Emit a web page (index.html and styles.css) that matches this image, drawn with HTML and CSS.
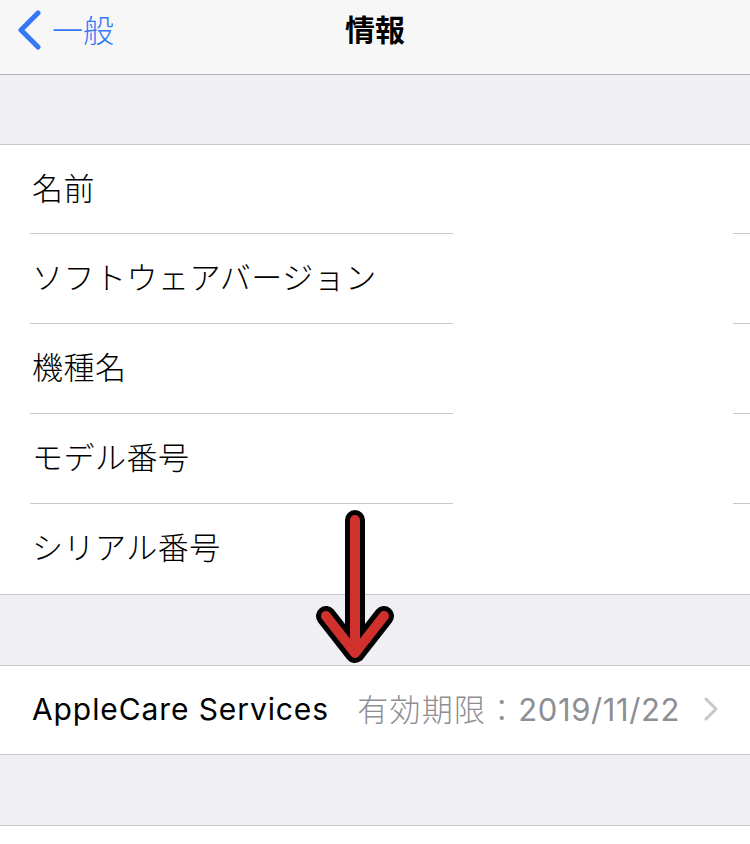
FILE: index.html
```html
<!DOCTYPE html>
<html lang="ja">
<head>
<meta charset="utf-8">
<link rel="stylesheet" href="styles.css">
</head>
<body>
<div class="screen">
  <header class="nav">
    <div class="back">
      <svg class="back-icon" width="26" height="40" viewBox="0 0 26 40"><path d="M22 3 L5 20 L22 37" fill="none" stroke="#3478f6" stroke-width="5" stroke-linecap="round" stroke-linejoin="round"/></svg>
      <span class="back-text">一般</span>
    </div>
    <div class="title">情報</div>
  </header>
  <div class="gap first"></div>
  <section class="group">
    <div class="row"><span class="label">名前</span></div>
    <div class="row"><span class="label">ソフトウェアバージョン</span></div>
    <div class="row"><span class="label">機種名</span></div>
    <div class="row"><span class="label">モデル番号</span></div>
    <div class="row last"><span class="label">シリアル番号</span></div>
  </section>
  <div class="gap"></div>
  <section class="group">
    <div class="row last single">
      <span class="label latin">AppleCare Services</span>
      <span class="value"><span class="jp">有効期限：</span>2019/11/22</span>
      <svg class="chev" width="16" height="24" viewBox="0 0 16 24"><path d="M3 2 L13 12 L3 22" fill="none" stroke="#c7c7cc" stroke-width="3" stroke-linecap="round" stroke-linejoin="round"/></svg>
    </div>
  </section>
  <div class="gap"></div>
  <div class="bottom"></div>
  <svg class="arrow" width="84" height="170" viewBox="0 0 84 170"><path d="M42 20 L42 145 M13 116 L42 153 L71 116" fill="none" stroke="#000" stroke-width="20" stroke-linecap="round" stroke-linejoin="round"/><path d="M42 20 L42 145 M13 116 L42 153 L71 116" fill="none" stroke="#d0312d" stroke-width="10" stroke-linecap="round" stroke-linejoin="round"/></svg>
</div>
</body>
</html>
```
FILE: styles.css
```css
* { box-sizing: border-box; }
html, body { margin: 0; padding: 0; }
body {
  width: 750px;
  height: 844px;
  overflow: hidden;
  background: #ffffff;
  font-family: "Inter", "Noto Sans CJK JP", sans-serif;
  color: #000;
}
.screen { position: relative; width: 750px; height: 844px; }
.nav {
  height: 75px;
  background: #f7f7f8;
  border-bottom: 1px solid #b2b2b5;
  display: flex;
  align-items: center;
  position: relative;
}
.back {
  display: flex;
  align-items: center;
  padding-left: 16px;
  gap: 10px;
  margin-top: -14px;
}
.back-text {
  color: #3478f6;
  font-family: "Noto Sans CJK JP", sans-serif;
  font-weight: 300;
  font-size: 31px;
  line-height: 40px;
  margin-top: -2px;
}
.title {
  position: absolute;
  left: 0; right: 0;
  top: 8px;
  text-align: center;
  font-family: "Noto Sans CJK JP", sans-serif;
  font-weight: 700;
  font-size: 30px;
  line-height: 40px;
}
.gap {
  height: 70px;
  background: #efeff4;
}
.gap.first { height: 69px; }
.group {
  background: #fff;
  border-top: 1px solid #c8c7cc;
  border-bottom: 1px solid #c8c7cc;
}
.row {
  height: 90px;
  display: flex;
  align-items: center;
  padding-left: 32px;
  padding-right: 30px;
  padding-bottom: 6px;
  position: relative;
}
.row::after {
  content: "";
  position: absolute;
  left: 30px; right: 0; bottom: 0;
  height: 1px;
  background: linear-gradient(to right, #c8c7cc 0 423px, transparent 423px 703px, #c8c7cc 703px);
}
.row.last::after { display: none; }
.group .row:first-child { height: 89px; }
.row.single { height: 88px !important; padding-bottom: 2px; padding-right: 31px; }
.label {
  font-size: 31px;
  font-family: "Noto Sans CJK JP", sans-serif;
  font-weight: 300;
  line-height: 40px;
  letter-spacing: 0.5px;
  flex: 0 0 auto;
}
.label.latin {
  font-family: "Inter", "Noto Sans CJK JP", sans-serif;
  font-weight: 400;
  font-size: 30px;
  letter-spacing: 0.9px;
}
.value {
  margin-left: auto;
  color: #8e8e93;
  font-size: 31px;
  line-height: 40px;
  letter-spacing: 0.6px;
  font-family: "Inter", "Noto Sans CJK JP", sans-serif;
  font-weight: 400;
}
.jp {
  font-family: "Noto Sans CJK JP", sans-serif;
  font-weight: 300;
  letter-spacing: 1.2px;
}
.chev { margin-left: 23px; }
.bottom { height: 20px; border-top: 1px solid #c8c7cc; }
.arrow {
  position: absolute;
  left: 313px;
  top: 500px;
}
```
